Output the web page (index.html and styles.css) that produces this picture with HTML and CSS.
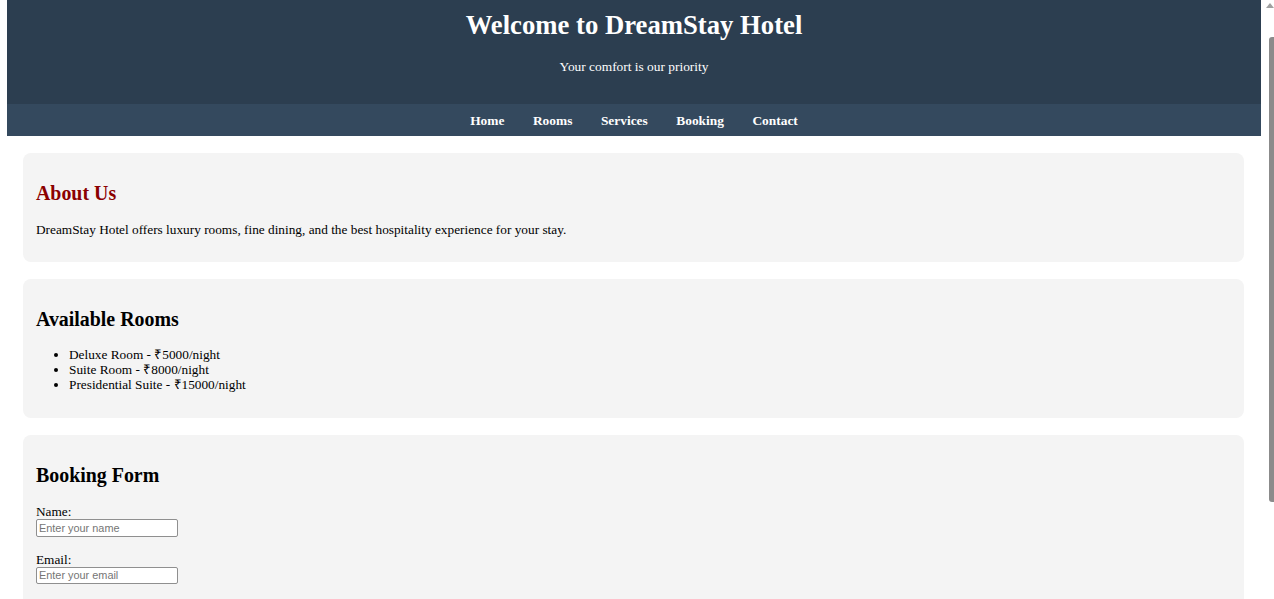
FILE: index.html
```html
<!DOCTYPE html>
<html lang="en">
<head>
<meta charset="utf-8">
<title>DreamStay Hotel</title>
<link rel="stylesheet" href="styles.css">
</head>
<body>
<header class="site-header">
  <h1 class="site-title">Welcome to DreamStay Hotel</h1>
  <p class="tagline">Your comfort is our priority</p>
</header>
<nav class="site-nav">
  <a class="nav-link" href="#home">Home</a>
  <a class="nav-link" href="#rooms">Rooms</a>
  <a class="nav-link" href="#services">Services</a>
  <a class="nav-link" href="#booking">Booking</a>
  <a class="nav-link" href="#contact">Contact</a>
</nav>
<main class="content">
  <section class="card" id="home">
    <h2 class="card-title card-title-accent">About Us</h2>
    <p class="card-text">DreamStay Hotel offers luxury rooms, fine dining, and the best hospitality experience for your stay.</p>
  </section>
  <section class="card" id="rooms">
    <h2 class="card-title">Available Rooms</h2>
    <ul class="room-list">
      <li>Deluxe Room - ₹5000/night</li>
      <li>Suite Room - ₹8000/night</li>
      <li>Presidential Suite - ₹15000/night</li>
    </ul>
  </section>
  <section class="card card-tall" id="booking">
    <h2 class="card-title">Booking Form</h2>
    <form class="booking-form">
      <label class="field-label" for="name">Name:</label>
      <input class="field-input" type="text" id="name" placeholder="Enter your name">
      <label class="field-label" for="email">Email:</label>
      <input class="field-input" type="email" id="email" placeholder="Enter your email">
    </form>
  </section>
</main>
<div class="fake-scrollbar" aria-hidden="true">
  <span class="fake-scrollbar-arrow"></span>
  <span class="fake-scrollbar-thumb"></span>
</div>
</body>
</html>
```

FILE: styles.css
```css
html {
  background: #ffffff;
}

body {
  margin: 0 13px 0 7px;
  font-family: "Liberation Serif", "Times New Roman", serif;
  font-size: 13.3px;
  line-height: 15px;
  color: #000000;
}

.site-header {
  background: #2c3e50;
  color: #ffffff;
  text-align: center;
  padding: 9.5px 0 30px;
}

.site-title {
  margin: 0 0 19.5px;
  font-size: 26.7px;
  line-height: 30px;
  font-weight: bold;
}

.tagline {
  margin: 0;
  font-size: 13.4px;
}

.site-nav {
  background: #34495e;
  text-align: center;
  padding: 8.5px 0;
}

.nav-link {
  color: #ffffff;
  text-decoration: none;
  font-weight: bold;
  font-size: 13.4px;
  margin: 0 12.6px;
}

.content {
  padding: 17px 17px 16px 16px;
}

.card {
  background: #f4f4f4;
  border-radius: 8px;
  padding: 13px;
  margin-bottom: 16.5px;
}

.card-tall {
  padding-bottom: 120px;
}

.card-title {
  margin: 16px 0 0;
  font-size: 19.9px;
  line-height: 22px;
  font-weight: bold;
}

.card-title-accent {
  color: #8b0000;
}

.card-text {
  margin: 17.5px 0 12.5px;
}

.room-list {
  margin: 17.4px 0 13.5px;
  padding-left: 33px;
}

.booking-form {
  margin: 18.5px 0 12px;
}

.field-label {
  display: block;
}

.field-input {
  display: block;
  box-sizing: border-box;
  width: 141.5px;
  height: 17.7px;
  margin: 0 0 14.5px;
  padding: 0 2px;
  border: 1px solid #8f8f8f;
  border-radius: 2px;
  background: #ffffff;
  font-family: "Liberation Sans", Arial, sans-serif;
  font-size: 10.9px;
  color: #000000;
}

.field-input::placeholder {
  color: #757575;
}

.fake-scrollbar {
  position: fixed;
  top: 0;
  right: 0;
  width: 13px;
  height: 100%;
  background: #ffffff;
}

.fake-scrollbar-arrow {
  position: absolute;
  top: 3px;
  right: 0;
  width: 0;
  height: 0;
  border-left: 4px solid transparent;
  border-right: 4px solid transparent;
  border-bottom: 5px solid #a0a0a0;
}

.fake-scrollbar-thumb {
  position: absolute;
  top: 37px;
  right: 0;
  width: 5px;
  height: 465px;
  background: #8b8b8b;
  border-radius: 3px 0 0 3px;
}
```
